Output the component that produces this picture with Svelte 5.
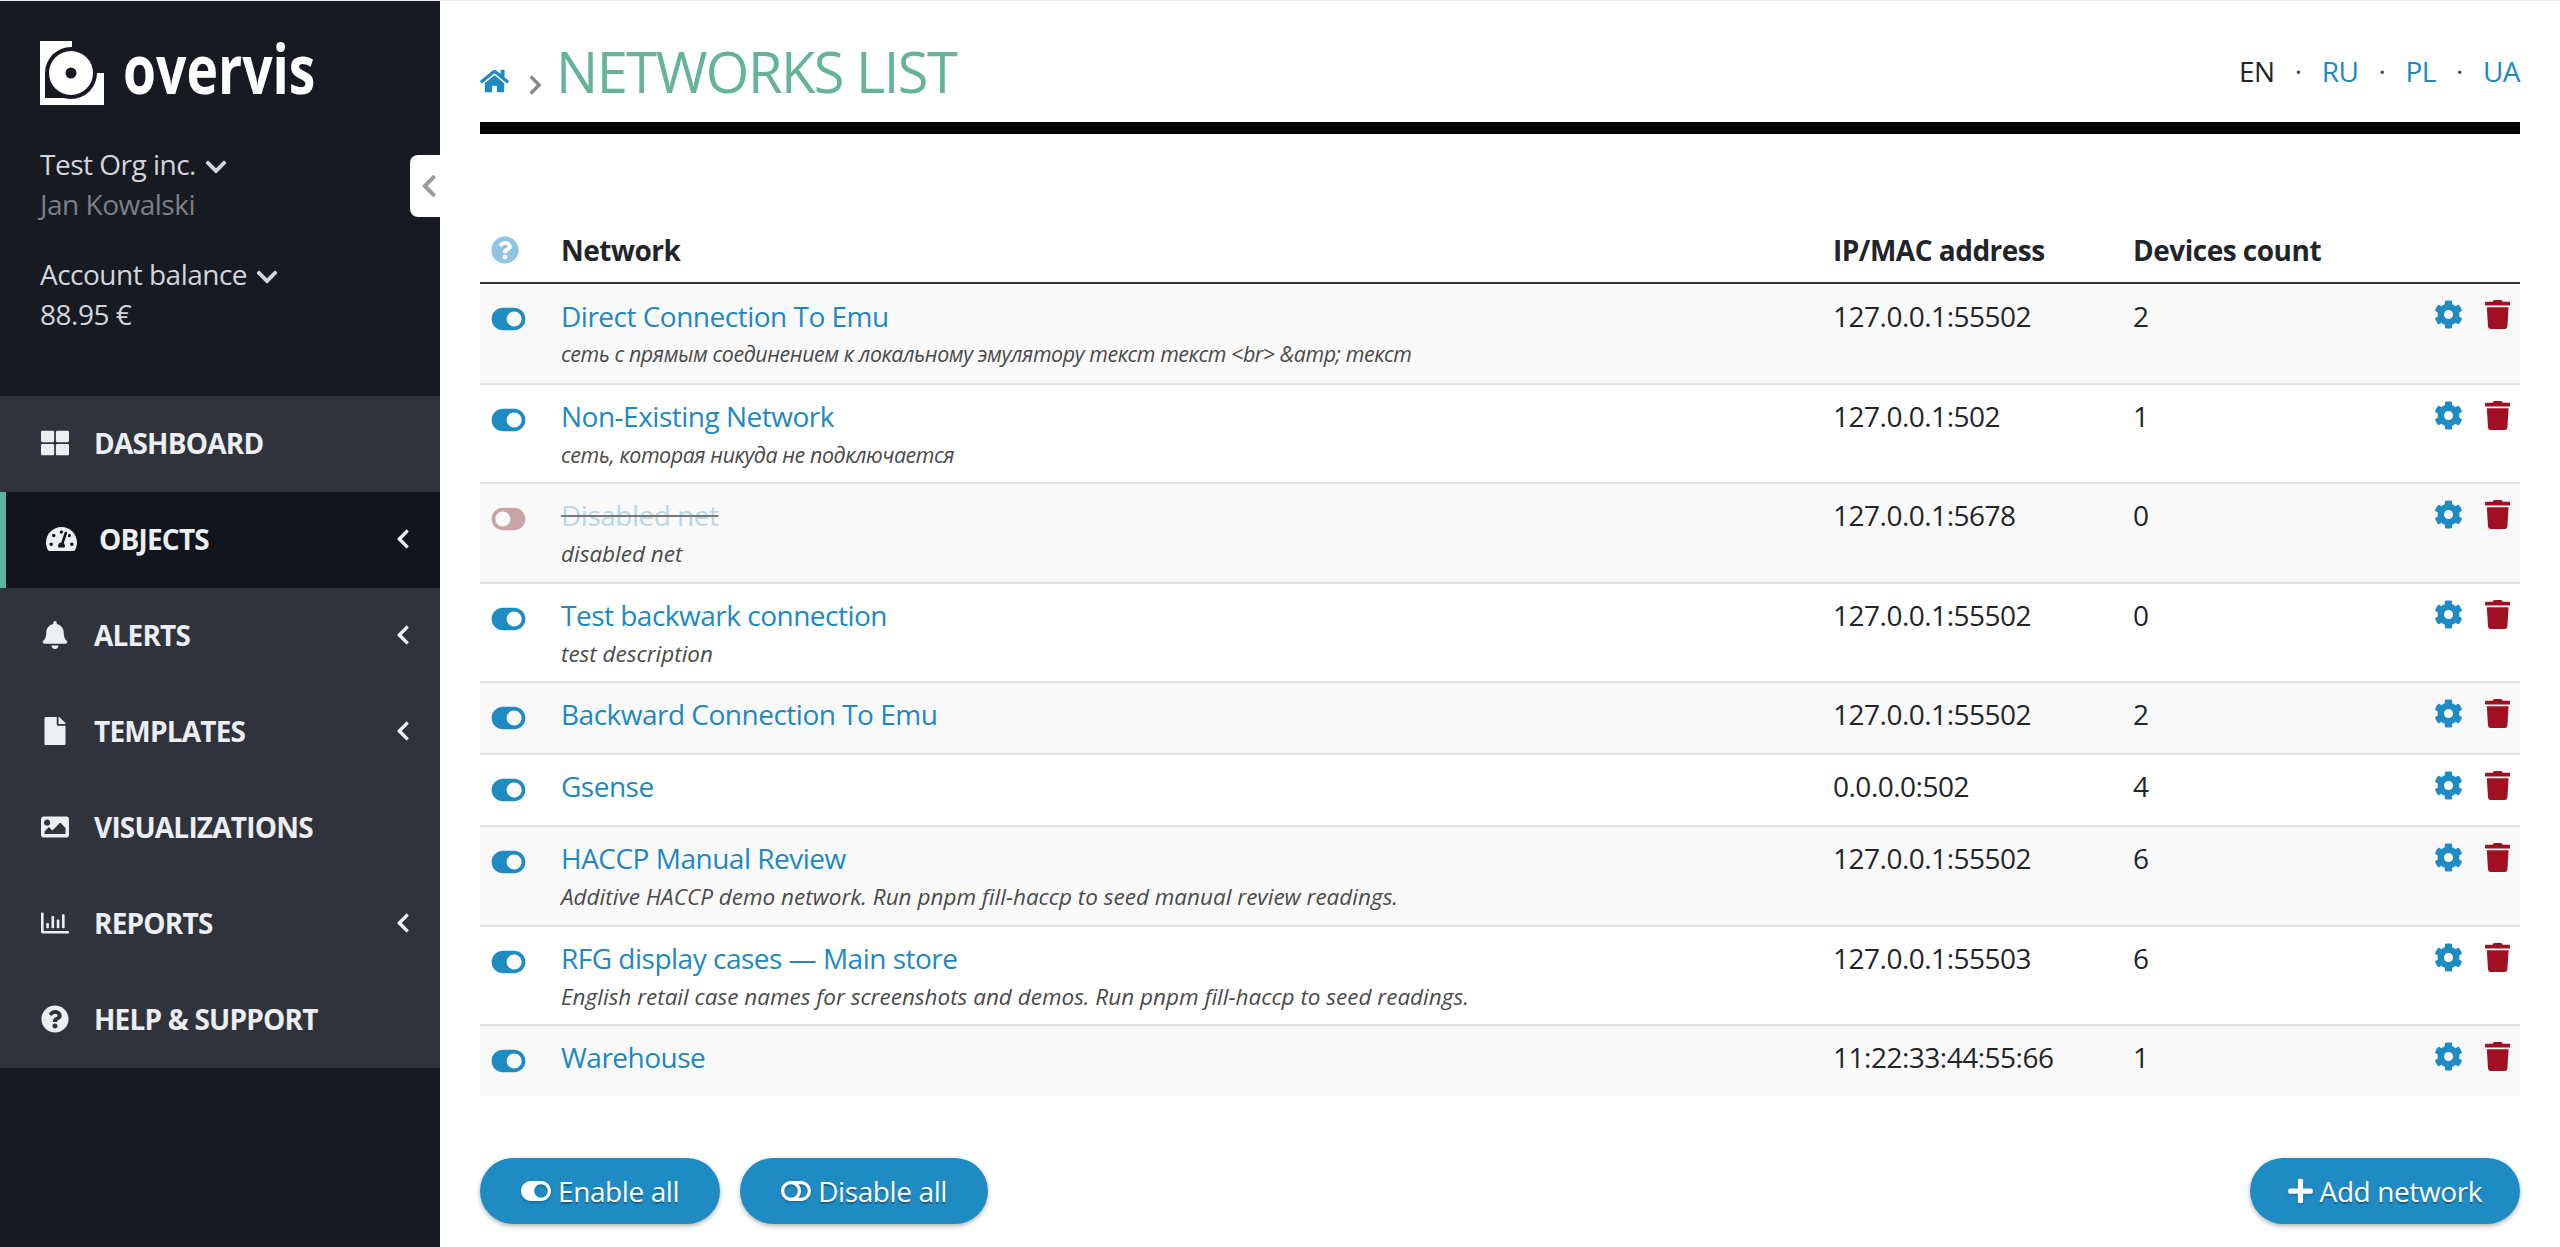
<script>
  const icons = {
    home: ['0 0 576 512', 'M280.37 148.26L96 300.11V464a16 16 0 0 0 16 16l112.06-.29a16 16 0 0 0 15.92-16V368a16 16 0 0 1 16-16h64a16 16 0 0 1 16 16v95.64a16 16 0 0 0 16 16.05L464 480a16 16 0 0 0 16-16V300L295.67 148.26a12.19 12.19 0 0 0-15.3 0zM571.6 251.47L488 182.56V44.05a12 12 0 0 0-12-12h-56a12 12 0 0 0-12 12v72.61L318.47 43a48 48 0 0 0-61 0L4.34 251.47a12 12 0 0 0-1.6 16.9l25.5 31A12 12 0 0 0 45.15 301l235.22-193.74a12.19 12.19 0 0 1 15.3 0L530.9 301a12 12 0 0 0 16.9-1.6l25.5-31a12 12 0 0 0-1.7-16.93z'],
    dashboard: ['0 0 512 512', 'M296 32h192c13.255 0 24 10.745 24 24v160c0 13.255-10.745 24-24 24H296c-13.255 0-24-10.745-24-24V56c0-13.255 10.745-24 24-24zm-80 0H24C10.745 32 0 42.745 0 56v160c0 13.255 10.745 24 24 24h192c13.255 0 24-10.745 24-24V56c0-13.255-10.745-24-24-24zM0 296v160c0 13.255 10.745 24 24 24h192c13.255 0 24-10.745 24-24V296c0-13.255-10.745-24-24-24H24c-13.255 0-24 10.745-24 24zm296 184h192c13.255 0 24-10.745 24-24V296c0-13.255-10.745-24-24-24H296c-13.255 0-24 10.745-24 24v160c0 13.255 10.745 24 24 24z'],
    gauge: ['0 0 576 512', 'M288 32C128.94 32 0 160.94 0 320c0 52.8 14.25 102.26 39.06 144.8 5.61 9.62 16.3 15.2 27.44 15.2h443c11.14 0 21.83-5.58 27.44-15.2C561.75 422.26 576 372.8 576 320c0-159.06-128.94-288-288-288zm0 64c14.71 0 26.58 10.13 30.32 23.65-1.11 2.26-2.64 4.23-3.45 6.67l-9.22 27.67c-5.13 3.49-10.97 6.01-17.64 6.01-17.67 0-32-14.33-32-32S270.33 96 288 96zM96 384c-17.67 0-32-14.33-32-32s14.33-32 32-32 32 14.33 32 32-14.33 32-32 32zm48-160c-17.67 0-32-14.33-32-32s14.33-32 32-32 32 14.33 32 32-14.33 32-32 32zm246.77-72.41l-61.33 184C343.13 347.33 352 364.54 352 384c0 11.72-3.38 22.55-8.88 32H232.88c-5.5-9.45-8.88-20.28-8.88-32 0-33.94 26.5-61.43 59.9-63.59l61.34-184.01c4.17-12.56 17.73-19.45 30.36-15.17 12.57 4.19 19.35 17.79 15.17 30.36zm14.66 57.2l15.52-46.55c3.47-1.29 7.13-2.23 11.05-2.23 17.67 0 32 14.33 32 32s-14.33 32-32 32c-11.38-.01-20.89-6.28-26.57-15.22zM480 384c-17.67 0-32-14.33-32-32s14.33-32 32-32 32 14.33 32 32-14.33 32-32 32z'],
    bell: ['0 0 448 512', 'M224 512c35.32 0 63.97-28.65 63.97-64H160.03c0 35.35 28.65 64 63.97 64zm215.39-149.71c-19.32-20.76-55.47-51.99-55.47-154.29 0-77.7-54.48-139.9-127.94-155.16V32c0-17.67-14.32-32-31.98-32s-31.98 14.33-31.98 32v20.84C118.56 68.1 64.08 130.3 64.08 208c0 102.3-36.15 133.53-55.47 154.29-6 6.45-8.66 14.16-8.61 21.71.11 16.4 12.98 32 32.1 32h383.8c19.12 0 32-15.6 32.1-32 .05-7.55-2.61-15.27-8.61-21.71z'],
    file: ['0 0 384 512', 'M224 136V0H24C10.7 0 0 10.7 0 24v464c0 13.3 10.7 24 24 24h336c13.3 0 24-10.7 24-24V160H248c-13.2 0-24-10.8-24-24zm160-14.1v6.1H256V0h6.1c6.4 0 12.5 2.5 17 7l97.9 98c4.5 4.5 7 10.6 7 16.9z'],
    image: ['0 0 512 512', 'M464 448H48c-26.51 0-48-21.49-48-48V112c0-26.51 21.49-48 48-48h416c26.51 0 48 21.49 48 48v288c0 26.51-21.49 48-48 48zM112 120c-30.928 0-56 25.072-56 56s25.072 56 56 56 56-25.072 56-56-25.072-56-56-56zM64 384h384V272l-87.515-87.515c-4.686-4.686-12.284-4.686-16.971 0L208 320l-55.515-55.515c-4.686-4.686-12.284-4.686-16.971 0L64 336v48z'],
    chart: ['0 0 512 512', 'M396.8 352h22.4c6.4 0 12.8-6.4 12.8-12.8V108.8c0-6.4-6.4-12.8-12.8-12.8h-22.4c-6.4 0-12.8 6.4-12.8 12.8v230.4c0 6.4 6.4 12.8 12.8 12.8zm-192 0h22.4c6.4 0 12.8-6.4 12.8-12.8V140.8c0-6.4-6.4-12.8-12.8-12.8h-22.4c-6.4 0-12.8 6.4-12.8 12.8v198.4c0 6.4 6.4 12.8 12.8 12.8zm96 0h22.4c6.4 0 12.8-6.4 12.8-12.8V204.8c0-6.4-6.4-12.8-12.8-12.8h-22.4c-6.4 0-12.8 6.4-12.8 12.8v134.4c0 6.4 6.4 12.8 12.8 12.8zM496 400H48V80c0-8.84-7.16-16-16-16H16C7.16 64 0 71.16 0 80v336c0 17.67 14.33 32 32 32h464c8.84 0 16-7.16 16-16v-16c0-8.84-7.16-16-16-16zm-387.2-48h22.4c6.4 0 12.8-6.4 12.8-12.8v-70.4c0-6.4-6.4-12.8-12.8-12.8h-22.4c-6.4 0-12.8 6.4-12.8 12.8v70.4c0 6.4 6.4 12.8 12.8 12.8z'],
    question: ['0 0 512 512', 'M504 256c0 136.997-111.043 248-248 248S8 392.997 8 256C8 119.083 119.043 8 256 8s248 111.083 248 248zM262.655 90c-54.497 0-89.255 22.957-116.549 63.758-3.536 5.286-2.353 12.415 2.715 16.258l34.699 26.31c5.205 3.947 12.621 3.008 16.665-2.122 17.864-22.658 30.113-35.797 57.303-35.797 20.429 0 45.698 13.148 45.698 32.958 0 14.976-12.363 22.667-32.534 33.976C247.128 238.528 216 254.941 216 296v4c0 6.627 5.373 12 12 12h56c6.627 0 12-5.373 12-12v-1.333c0-28.462 83.186-29.647 83.186-106.667 0-58.002-60.165-102-116.531-102zM256 338c-25.365 0-46 20.635-46 46 0 25.364 20.635 46 46 46s46-20.636 46-46c0-25.365-20.635-46-46-46z'],
    cog: ['0 0 512 512', 'M487.4 315.7l-42.6-24.6c4.3-23.2 4.3-47 0-70.2l42.6-24.6c4.9-2.8 7.1-8.6 5.5-14-11.1-35.6-30-67.8-54.7-94.6-3.8-4.1-10-5.1-14.8-2.3L380.8 110c-17.9-15.4-38.5-27.3-60.8-35.1V25.8c0-5.6-3.9-10.5-9.4-11.7-36.7-8.2-74.3-7.8-109.2 0-5.5 1.2-9.4 6.1-9.4 11.7V75c-22.2 7.9-42.8 19.8-60.8 35.1L88.7 85.5c-4.9-2.8-11-1.9-14.8 2.3-24.7 26.7-43.6 58.9-54.7 94.6-1.7 5.4.6 11.2 5.5 14L67.3 221c-4.3 23.2-4.3 47 0 70.2l-42.6 24.6c-4.9 2.8-7.1 8.6-5.5 14 11.1 35.6 30 67.8 54.7 94.6 3.8 4.1 10 5.1 14.8 2.3l42.6-24.6c17.9 15.4 38.5 27.3 60.8 35.1v49.2c0 5.6 3.9 10.5 9.4 11.7 36.7 8.2 74.3 7.8 109.2 0 5.5-1.2 9.4-6.1 9.4-11.7v-49.2c22.2-7.9 42.8-19.8 60.8-35.1l42.6 24.6c4.9 2.8 11 1.9 14.8-2.3 24.7-26.7 43.6-58.9 54.7-94.6 1.5-5.5-.7-11.3-5.6-14.1zM256 336c-44.1 0-80-35.9-80-80s35.9-80 80-80 80 35.9 80 80-35.9 80-80 80z'],
    trash: ['0 0 448 512', 'M432 32H312l-9.4-18.7A24 24 0 0 0 281.1 0H166.8a23.72 23.72 0 0 0-21.4 13.3L136 32H16A16 16 0 0 0 0 48v32a16 16 0 0 0 16 16h416a16 16 0 0 0 16-16V48a16 16 0 0 0-16-16zM53.2 467a48 48 0 0 0 47.9 45h245.8a48 48 0 0 0 47.9-45L416 128H32z'],
    plus: ['0 0 448 512', 'M416 208H272V64c0-17.67-14.33-32-32-32h-32c-17.67 0-32 14.33-32 32v144H32c-17.67 0-32 14.33-32 32v32c0 17.67 14.33 32 32 32h144v144c0 17.67 14.33 32 32 32h32c17.67 0 32-14.33 32-32V304h144c17.67 0 32-14.33 32-32v-32c0-17.67-14.33-32-32-32z'],
    on: ['0 0 576 512', 'M384 64H192C86 64 0 150 0 256s86 192 192 192h192c106 0 192-86 192-192S490 64 384 64zm0 320c-70.8 0-128-57.3-128-128 0-70.8 57.3-128 128-128 70.8 0 128 57.3 128 128 0 70.8-57.3 128-128 128z'],
    off: ['0 0 576 512', 'M384 64H192C85.961 64 0 149.961 0 256s85.961 192 192 192h192c106.039 0 192-85.961 192-192S490.039 64 384 64zM64 256c0-70.741 57.249-128 128-128 70.741 0 128 57.249 128 128 0 70.741-57.249 128-128 128-70.741 0-128-57.249-128-128zm320 128h-48.891c65.16-72.709 65.215-183.256 0-256H384c70.741 0 128 57.249 128 128 0 70.741-57.249 128-128 128z'],
    left: ['0 0 320 512', 'M34.52 239.03L228.87 44.69c9.37-9.37 24.57-9.37 33.94 0l22.67 22.67c9.36 9.36 9.37 24.52.04 33.9L131.49 256l154.02 154.75c9.34 9.38 9.32 24.54-.04 33.9l-22.67 22.67c-9.37 9.37-24.57 9.37-33.94 0L34.52 272.97c-9.37-9.37-9.37-24.57 0-33.94z'],
    right: ['0 0 320 512', 'M285.476 272.971L91.132 467.314c-9.373 9.373-24.569 9.373-33.941 0l-22.667-22.667c-9.357-9.357-9.375-24.522-.04-33.901L188.505 256 34.484 101.255c-9.335-9.379-9.317-24.544.04-33.901l22.667-22.667c9.373-9.373 24.569-9.373 33.941 0L285.475 239.03c9.373 9.372 9.373 24.568.001 33.941z'],
    down: ['0 0 448 512', 'M207.029 381.476L12.686 187.132c-9.373-9.373-9.373-24.569 0-33.941l22.667-22.667c9.357-9.357 24.522-9.375 33.901-.04L224 284.505l154.745-154.021c9.379-9.335 24.544-9.317 33.901.04l22.667 22.667c9.373 9.373 9.373 24.569 0 33.941L240.971 381.476c-9.373 9.372-24.569 9.372-33.942 0z']
  }

  const menu = [
    { label: 'DASHBOARD', icon: 'dashboard' },
    { label: 'OBJECTS', icon: 'gauge', arrow: true, active: true },
    { label: 'ALERTS', icon: 'bell', arrow: true },
    { label: 'TEMPLATES', icon: 'file', arrow: true },
    { label: 'VISUALIZATIONS', icon: 'image' },
    { label: 'REPORTS', icon: 'chart', arrow: true },
    { label: 'HELP & SUPPORT', icon: 'question' }
  ]

  const networks = [
    { name: 'Direct Connection To Emu', desc: 'сеть с прямым соединением к локальному эмулятору текст текст <br> &amp; текст', ru: true, addr: '127.0.0.1:55502', count: 2 },
    { name: 'Non-Existing Network', desc: 'сеть, которая никуда не подключается', ru: true, addr: '127.0.0.1:502', count: 1 },
    { name: 'Disabled net', desc: 'disabled net', addr: '127.0.0.1:5678', count: 0, disabled: true },
    { name: 'Test backwark connection', desc: 'test description', addr: '127.0.0.1:55502', count: 0 },
    { name: 'Backward Connection To Emu', addr: '127.0.0.1:55502', count: 2 },
    { name: 'Gsense', addr: '0.0.0.0:502', count: 4 },
    { name: 'HACCP Manual Review', desc: 'Additive HACCP demo network. Run pnpm fill-haccp to seed manual review readings.', addr: '127.0.0.1:55502', count: 6 },
    { name: 'RFG display cases — Main store', desc: 'English retail case names for screenshots and demos. Run pnpm fill-haccp to seed readings.', addr: '127.0.0.1:55503', count: 6 },
    { name: 'Warehouse', addr: '11:22:33:44:55:66', count: 1 }
  ]
</script>

{#snippet icon(name, cls)}
  <svg class="icon {cls}" viewBox={icons[name][0]} aria-hidden="true"><path fill="currentColor" d={icons[name][1]} /></svg>
{/snippet}

<div class="layout">
  <aside class="sidebar">
    <div class="brand">
      <svg class="logo" viewBox="0 0 64 64" aria-hidden="true">
        <rect width="64" height="64" fill="#fff" />
        <rect x="32" width="32" height="32" fill="#171a21" />
        <rect x="5" y="32" width="27" height="25" fill="#171a21" />
        <circle cx="31" cy="32" r="26" fill="#171a21" />
        <circle cx="31" cy="32" r="22" fill="#fff" />
        <circle cx="31" cy="32" r="5.5" fill="#171a21" />
      </svg>
      <span class="wordmark">overvis</span>
    </div>

    <div class="account">
      <div>Test Org inc. {@render icon('down', 'caret')}</div>
      <div class="muted">Jan Kowalski</div>
    </div>
    <div class="account balance">
      <div>Account balance {@render icon('down', 'caret')}</div>
      <div>88.95 €</div>
    </div>

    <button class="collapse" aria-label="Collapse sidebar">{@render icon('left', 'collapse-icon')}</button>

    <nav class="menu">
      {#each menu as item}
        <div class="menu-item" class:active={item.active}>
          <span class="menu-icon">{@render icon(item.icon, item.icon)}</span>
          <span class="menu-label">{item.label}</span>
          {#if item.arrow}{@render icon('left', 'menu-arrow')}{/if}
        </div>
      {/each}
    </nav>
  </aside>

  <main class="content">
    <header class="page-head">
      <div class="crumbs">
        {@render icon('home', 'home')}
        {@render icon('right', 'crumb-sep')}
        <h1>NETWORKS LIST</h1>
      </div>
      <div class="langs">
        <span>EN</span><i>·</i><a href="#ru">RU</a><i>·</i><a href="#pl">PL</a><i>·</i><a href="#ua">UA</a>
      </div>
    </header>

    <table class="networks">
      <colgroup>
        <col style="width: 81px" />
        <col />
        <col style="width: 300px" />
        <col style="width: 269px" />
        <col style="width: 118px" />
      </colgroup>
      <thead>
        <tr>
          <th class="state">{@render icon('question', 'help')}</th>
          <th>Network</th>
          <th>IP/MAC address</th>
          <th>Devices count</th>
          <th></th>
        </tr>
      </thead>
      <tbody>
        {#each networks as net}
          <tr>
            <td class="state">{@render icon('on', net.disabled ? 'toggle off' : 'toggle')}</td>
            <td>
              <a class="net-name" class:disabled={net.disabled} href="#net">{net.name}</a>
              {#if net.desc}<div class="desc" class:ru={net.ru}>{net.desc}</div>{/if}
            </td>
            <td>{net.addr}</td>
            <td>{net.count}</td>
            <td class="actions">
              {@render icon('cog', 'cog')}
              {@render icon('trash', 'trash')}
            </td>
          </tr>
        {/each}
      </tbody>
    </table>

    <div class="buttons">
      <button class="btn">{@render icon('on', 'btn-toggle')}Enable all</button>
      <button class="btn">{@render icon('off', 'btn-toggle')}Disable all</button>
      <button class="btn add">{@render icon('plus', 'btn-plus')}Add network</button>
    </div>
  </main>
</div>

<style>
  :global(body) {
    margin: 0;
    background: #fff;
    overflow: hidden;
  }

  .layout {
    display: flex;
    height: 1246px;
    border-top: 1px solid #ececec;
    font-family: 'Open Sans', 'Noto Sans', sans-serif;
    font-size: 28px;
    line-height: 40px;
    letter-spacing: -0.5px;
    color: #212529;
  }

  .icon {
    display: inline-block;
  }

  .sidebar {
    position: relative;
    flex: 0 0 440px;
    background: #171a21;
    color: #d3d5da;
    box-sizing: border-box;
    padding-top: 40px;
  }

  .brand {
    display: flex;
    align-items: center;
    gap: 19px;
    height: 64px;
    padding-left: 40px;
    margin-bottom: 39px;
  }

  .logo {
    width: 64px;
    height: 64px;
  }

  .wordmark {
    display: inline-block;
    font-size: 68px;
    font-weight: 700;
    line-height: 64px;
    letter-spacing: 0;
    color: #fff;
    margin-bottom: 10px;
    transform: scaleX(0.785);
    transform-origin: left center;
  }

  .account {
    padding-left: 40px;
  }

  .balance {
    margin-top: 30px;
  }

  .muted {
    color: #7b7f89;
  }

  .caret {
    width: 22px;
    height: 24px;
    margin-left: 2px;
    vertical-align: -4px;
  }

  .collapse {
    position: absolute;
    top: 154px;
    right: 0;
    width: 30px;
    height: 62px;
    padding: 0;
    border: 0;
    border-radius: 8px 0 0 8px;
    background: #fff;
    color: #9a9a9a;
    display: flex;
    align-items: center;
    justify-content: flex-end;
  }

  .collapse-icon {
    width: 16px;
    height: 26px;
    margin-right: 3px;
  }

  .menu {
    margin-top: 62px;
    background: #30333b;
  }

  .menu-item {
    display: flex;
    align-items: center;
    box-sizing: border-box;
    height: 96px;
    padding: 0 30px 2px 41px;
    font-weight: 700;
    letter-spacing: -0.8px;
    color: #eceef2;
  }

  .menu-item.active {
    background: #12151b;
    border-left: 6px solid #5fb49c;
    padding-left: 40px;
  }

  .menu-icon {
    width: 53px;
    flex: none;
    display: flex;
  }

  .menu-icon .icon {
    width: 28px;
    height: 28px;
  }

  .menu-icon .gauge {
    width: 31px;
  }

  .menu-label {
    flex: 1;
    line-height: 40px;
  }

  .menu-arrow {
    width: 14px;
    height: 22px;
  }

  .content {
    flex: 1;
    min-width: 0;
    padding: 0 40px;
  }

  .page-head {
    display: flex;
    justify-content: space-between;
    align-items: flex-end;
    height: 121px;
    border-bottom: 12px solid #000;
  }

  .crumbs {
    display: flex;
    align-items: flex-end;
    height: 100%;
  }

  h1 {
    margin: 0 0 13px 13px;
    font-size: 56px;
    line-height: 76px;
    font-weight: 400;
    letter-spacing: -1.5px;
    color: #66b39b;
  }

  .home {
    width: 29px;
    height: 26px;
    color: #1e8bc3;
    margin-bottom: 28px;
  }

  .crumb-sep {
    width: 15px;
    height: 22px;
    color: #888;
    margin: 0 0 26px 19px;
  }

  .langs {
    display: flex;
    margin-bottom: 31px;
  }

  .langs i {
    font-style: normal;
    width: 47px;
    text-align: center;
    color: #444;
  }

  a {
    color: #1e88bf;
    text-decoration: none;
  }

  .networks {
    width: 100%;
    margin-top: 93px;
    border-collapse: collapse;
    table-layout: fixed;
  }

  th {
    text-align: left;
    height: 56px;
    padding: 3px 0 0;
    box-sizing: border-box;
    vertical-align: top;
    font-weight: 700;
    border-bottom: 2px solid #333;
  }

  td {
    padding: 12px 0 18px;
    vertical-align: top;
  }

  tbody tr:first-child td {
    padding-bottom: 19px;
  }

  tbody tr + tr td {
    border-top: 2px solid #dee2e6;
    padding-top: 11px;
    padding-bottom: 19px;
  }

  tbody tr:nth-child(odd) {
    background: #f9f9f9;
  }

  .state {
    padding-left: 11px;
    box-sizing: border-box;
  }

  .help {
    width: 28px;
    height: 28px;
    color: #8fc5e1;
    margin-top: 6px;
    vertical-align: top;
  }

  .toggle {
    width: 35px;
    height: 30px;
    color: #1e8bc3;
    margin-top: 8px;
    vertical-align: top;
  }

  tr + tr .toggle {
    margin-top: 9px;
  }

  .toggle.off {
    color: #c9a3a7;
    transform: scaleX(-1);
  }

  .net-name.disabled {
    color: #b9d7e6;
    text-decoration: line-through #777 2px;
  }

  .desc {
    margin: 4px 0 -4px;
    font-size: 22.5px;
    line-height: 27.5px;
    font-style: italic;
    letter-spacing: 0;
    color: #4a4a4a;
  }

  tr + tr .desc {
    margin: 5px 0 -5px;
  }

  .desc.ru {
    font-size: 21.4px;
    letter-spacing: -0.42px;
  }

  .actions {
    white-space: nowrap;
    text-align: right;
    padding-right: 10px;
    box-sizing: border-box;
  }

  .cog {
    width: 29px;
    height: 29px;
    color: #1e8bc3;
    vertical-align: top;
    margin-top: 4px;
  }

  .trash {
    width: 25.4px;
    height: 29px;
    color: #a01020;
    margin-left: 15px;
    vertical-align: top;
    margin-top: 4px;
  }

  tr + tr .cog,
  tr + tr .trash {
    margin-top: 5px;
  }

  .buttons {
    display: flex;
    gap: 20px;
    margin-top: 62px;
  }

  .btn {
    height: 66px;
    padding: 0 41px;
    border: 0;
    border-radius: 33px;
    background: #1e8bc3;
    color: #fff;
    font: inherit;
    letter-spacing: -0.4px;
    text-shadow: 0 2px 1px rgba(0, 0, 0, 0.3);
    box-shadow: 0 2px 5px rgba(0, 0, 0, 0.3);
    display: flex;
    align-items: center;
  }

  .btn-toggle {
    width: 30px;
    height: 28px;
    margin-right: 7px;
    filter: drop-shadow(0 1px 1px rgba(0, 0, 0, 0.3));
  }

  .btn-plus {
    width: 25px;
    height: 28px;
    margin-right: 7px;
    filter: drop-shadow(0 1px 1px rgba(0, 0, 0, 0.3));
  }

  .add {
    margin-left: auto;
    padding: 0 38px;
  }
</style>
